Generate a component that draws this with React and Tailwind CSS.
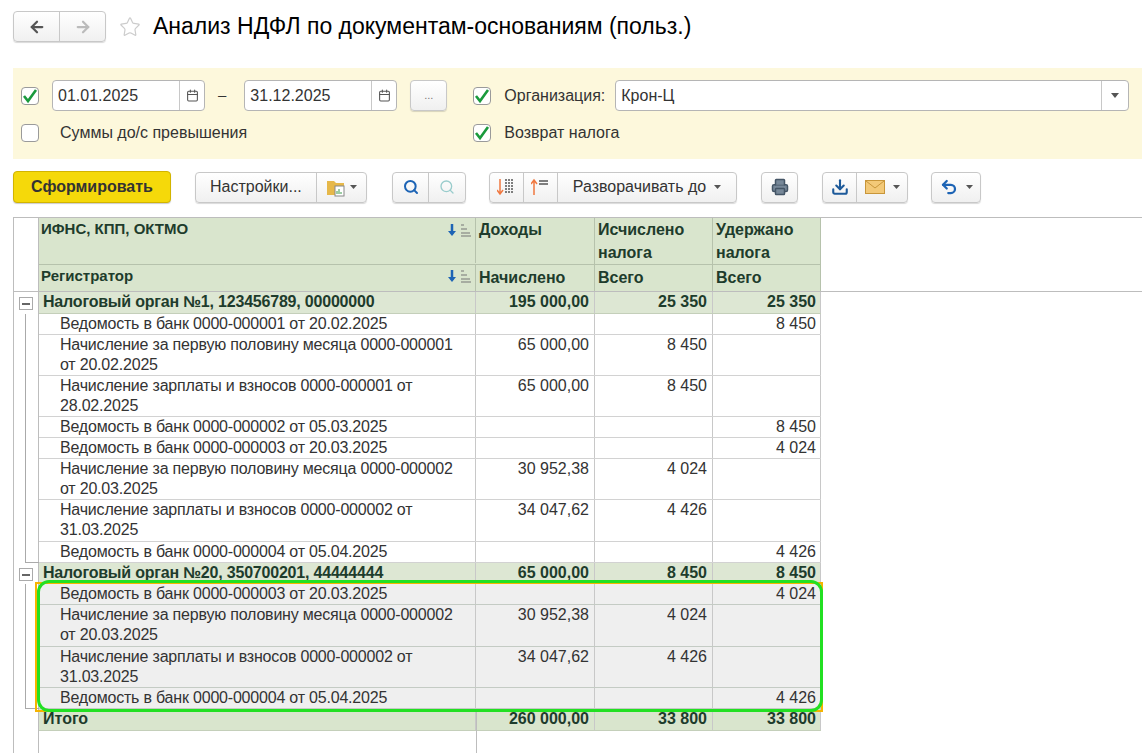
import { ArrowLeft, ArrowRight, Star, Calendar, Search, Printer, Download, Undo2 } from 'lucide-react'

const F = { fontFamily: '"Liberation Sans", Arial, sans-serif' }

const rows = [
  { g: true, name: 'Налоговый орган №1, 123456789, 00000000', a: '195 000,00', b: '25 350', c: '25 350', h: 22 },
  { name: 'Ведомость в банк 0000-000001 от 20.02.2025', c: '8 450', h: 21 },
  { name: 'Начисление за первую половину месяца 0000-000001 от 20.02.2025', a: '65 000,00', b: '8 450', h: 41 },
  { name: 'Начисление зарплаты и взносов 0000-000001 от 28.02.2025', a: '65 000,00', b: '8 450', h: 41 },
  { name: 'Ведомость в банк 0000-000002 от 05.03.2025', c: '8 450', h: 21 },
  { name: 'Ведомость в банк 0000-000003 от 20.03.2025', c: '4 024', h: 21 },
  { name: 'Начисление за первую половину месяца 0000-000002 от 20.03.2025', a: '30 952,38', b: '4 024', h: 41 },
  { name: 'Начисление зарплаты и взносов 0000-000002 от 31.03.2025', a: '34 047,62', b: '4 426', h: 42 },
  { name: 'Ведомость в банк 0000-000004 от 05.04.2025', c: '4 426', h: 21, last: true },
  { g: true, name: 'Налоговый орган №20, 350700201, 44444444', a: '65 000,00', b: '8 450', c: '8 450', h: 21 },
  { s: true, name: 'Ведомость в банк 0000-000003 от 20.03.2025', c: '4 024', h: 21 },
  { s: true, name: 'Начисление за первую половину месяца 0000-000002 от 20.03.2025', a: '30 952,38', b: '4 024', h: 42 },
  { s: true, name: 'Начисление зарплаты и взносов 0000-000002 от 31.03.2025', a: '34 047,62', b: '4 426', h: 41 },
  { s: true, name: 'Ведомость в банк 0000-000004 от 05.04.2025', c: '4 426', h: 21, last: true },
]

const Check = ({ on }) => (
  <div className="w-[18px] h-[18px] border border-[#9a9a9a] bg-white rounded-sm flex items-center justify-center">
    {on && (
      <svg width="16" height="16" viewBox="0 0 16 16"><path d="M2 8l4 5 8-11" stroke="#1a9a3c" strokeWidth="2.6" fill="none" /></svg>
    )}
  </div>
)

const Btn = ({ children, className = '' }) => (
  <div className={`h-[31px] border border-[#c8c8c8] rounded-sm bg-gradient-to-b from-white to-[#f0f0f0] shadow-[0_1px_1px_rgba(0,0,0,0.15)] flex items-center ${className}`}>{children}</div>
)

const Caret = () => <svg width="7" height="4"><path d="M0 0h7L3.5 4z" fill="#555" /></svg>

const Sorter = () => (
  <svg width="26" height="16" viewBox="0 0 26 16">
    <path d="M5 2v10" stroke="#1d64b5" strokeWidth="2.5" /><path d="M1 9l4 5 4-5z" fill="#1d64b5" />
    <path d="M14 3h3M14 7h6M14 11h9M14 14h10" stroke="#777" strokeWidth="1.2" />
  </svg>
)

export default function App() {
  return (
    <div className="w-[1142px] h-[753px] bg-white overflow-hidden relative text-[#333]" style={F}>
      <div className="flex items-center h-[52px] pl-[13px] pt-[1px]">
        <Btn className="w-[93px]">
          <div className="w-[46px] flex justify-center border-r border-[#c8c8c8] h-full items-center"><ArrowLeft size={18} strokeWidth={3} color="#555" /></div>
          <div className="flex-1 flex justify-center"><ArrowRight size={18} strokeWidth={3} color="#bbb" /></div>
        </Btn>
        <Star size={22} color="#ccc" strokeWidth={1.3} className="ml-[13px]" />
        <div className="ml-[12px] text-[23px] text-black">Анализ НДФЛ по документам-основаниям (польз.)</div>
      </div>

      <div className="mt-[16px] ml-[13px] bg-[#fdf8dc] h-[91px] pt-[12px] flex text-[15px]">
        <div className="flex flex-col pl-[8px]">
          <div className="flex items-center gap-[13px]">
            <Check on />
            {['01.01.2025', '31.12.2025'].map((d, i) => (
              <div key={d} className="flex items-center">
                {i === 1 && <span className="mr-[18px]">–</span>}
                <div className="w-[153px] h-[31px] bg-white border border-[#b5b5b5] rounded-sm flex items-center">
                  <span className="flex-1 pl-[5px] text-[16px]">{d}</span>
                  <div className="w-[25px] h-full border-l border-[#c8c8c8] flex items-center justify-center"><Calendar size={13} color="#555" /></div>
                </div>
              </div>
            ))}
            <Btn className="w-[37px] justify-center text-[11px] text-[#777]">...</Btn>
          </div>
          <div className="flex items-center gap-[13px] mt-[10px]">
            <Check /><span className="ml-[8px] text-[16px]">Суммы до/с превышения</span>
          </div>
        </div>
        <div className="flex flex-col ml-[26px]">
          <div className="flex items-center">
            <Check on />
            <span className="ml-[13px] text-[16px]">Организация:</span>
            <div className="ml-[10px] w-[514px] h-[31px] bg-white border border-[#b5b5b5] rounded-sm flex items-center">
              <span className="flex-1 pl-[5px] text-[16px]">Крон-Ц</span>
              <div className="w-[27px] h-full border-l border-[#c8c8c8] flex items-center justify-center"><svg width="8" height="5"><path d="M0 0h8L4 5z" fill="#555" /></svg></div>
            </div>
          </div>
          <div className="flex items-center mt-[10px]">
            <Check on /><span className="ml-[13px] text-[16px]">Возврат налога</span>
          </div>
        </div>
      </div>

      <div className="flex items-center mt-[12px] ml-[13px] text-[16px]">
        <div className="w-[158px] h-[32px] bg-[#f5d90a] border border-[#d2b400] rounded-sm font-bold flex items-center justify-center shadow-[0_1px_1px_rgba(0,0,0,0.2)]">Сформировать</div>
        <Btn className="ml-[24px]">
          <div className="px-[14px] h-full flex items-center border-r border-[#c8c8c8]">Настройки...</div>
          <div className="w-[49px] flex items-center justify-center gap-1">
            <svg width="20" height="20" viewBox="0 0 20 20"><path d="M1 4h7l2 2h8v12H1z" fill="#e6b84a" /><rect x="9" y="9" width="9" height="10" fill="#fff" stroke="#888" /><path d="M11 17v-3M13 17v-5M15 17v-2" stroke="#3a9a4a" /></svg>
            <Caret />
          </div>
        </Btn>
        <Btn className="ml-[25px] w-[74px]">
          <div className="flex-1 flex justify-center border-r border-[#c8c8c8] h-full items-center"><Search size={16} strokeWidth={3} color="#1d64b5" /></div>
          <div className="flex-1 flex justify-center"><Search size={16} strokeWidth={2} color="#9cc" /></div>
        </Btn>
        <Btn className="ml-[23px]">
          <div className="w-[34px] h-full flex items-center justify-center border-r border-[#c8c8c8]">
            <svg width="18" height="18" viewBox="0 0 18 18"><path d="M3 1v14M0 12l3 4 3-4" stroke="#f07840" strokeWidth="1.5" fill="none" /><path d="M8 2h9M8 5h9M8 8h9M8 11h9M8 14h9" stroke="#555" strokeWidth="1.3" strokeDasharray="2 1" /></svg>
          </div>
          <div className="w-[34px] h-full flex items-center justify-center border-r border-[#c8c8c8]">
            <svg width="18" height="18" viewBox="0 0 18 18"><path d="M3 17V3M0 6l3-4 3 4" stroke="#f07840" strokeWidth="1.5" fill="none" /><path d="M8 3h9M8 6h9" stroke="#555" strokeWidth="1.3" /></svg>
          </div>
          <div className="px-[15px] flex items-center gap-[8px]">Разворачивать до<Caret /></div>
        </Btn>
        <Btn className="ml-[24px] w-[37px] justify-center"><Printer size={18} color="#456" fill="#789" /></Btn>
        <Btn className="ml-[24px]">
          <div className="w-[34px] h-full flex items-center justify-center border-r border-[#c8c8c8]"><Download size={18} strokeWidth={2.8} color="#1d5a9a" /></div>
          <div className="w-[50px] flex items-center justify-center gap-[8px]">
            <svg width="20" height="14" viewBox="0 0 20 14"><rect x="0.5" y="0.5" width="19" height="13" fill="#f3c978" stroke="#c8963a" /><path d="M1 1l9 7 9-7" stroke="#c8963a" fill="none" /></svg>
            <Caret />
          </div>
        </Btn>
        <Btn className="ml-[23px] w-[50px] justify-center gap-[8px]"><Undo2 size={18} strokeWidth={3} color="#1d64b5" /><Caret /></Btn>
      </div>

      {/* table */}
      <div className="absolute left-[13px] top-[217px] right-0 bottom-0 border-l border-t border-[#bdbdbd]">
        <div className="absolute left-[462px] top-0 bottom-0 w-px bg-[#bdbdbd]" />
        <div className="absolute left-[24px] top-0 bottom-0 w-px bg-[#bdbdbd]" />
        <div className="relative flex border-b border-[#bdbdbd]">
          <div className="w-[25px] shrink-0" />
          <div className="w-[782px] grid grid-cols-[437px_119px_118px_108px] text-[16px] font-bold text-[#1e3c2c] bg-[#d9e5cd]">
            <div className="h-[45px] px-[2px] text-[15px] flex justify-between border-r border-[#b6c2ac]"><span>ИФНС, КПП, ОКТМО</span><span className="mt-[4px]"><Sorter /></span></div>
            <div className="px-[3px] border-r border-[#b6c2ac]">Доходы</div>
            <div className="px-[3px] leading-[23px] border-r border-[#b6c2ac]">Исчислено налога</div>
            <div className="px-[3px] leading-[23px] border-r border-[#b6c2ac]">Удержано налога</div>
            <div className="h-[27px] px-[2px] text-[15px] flex justify-between border-t border-r border-[#b6c2ac]"><span>Регистратор</span><span className="mt-[3px]"><Sorter /></span></div>
            <div className="px-[3px] pt-[1px] border-t border-r border-[#b6c2ac]">Начислено</div>
            <div className="px-[3px] pt-[1px] border-t border-r border-[#b6c2ac]">Всего</div>
            <div className="px-[3px] pt-[1px] border-t border-r border-[#b6c2ac]">Всего</div>
          </div>
        </div>

        {rows.map((r, i) => (
          <div key={i} className="flex relative" style={{ height: r.h }}>
            <div className="w-[25px] shrink-0 relative">
              {r.g ? (
                <div className="absolute left-[5px] top-[5px] w-[14px] h-[13px] border border-[#aaa] bg-white flex items-center justify-center"><div className="w-[8px] h-[2px] bg-[#666]" /></div>
              ) : (
                <div className="absolute left-[11px] top-0 w-px h-full bg-[#aaa]" />
              )}
              {r.last && <div className="absolute left-[11px] bottom-0 w-[14px] h-px bg-[#aaa]" />}
            </div>
            <div className={`w-[782px] grid grid-cols-[437px_119px_118px_108px] text-[16px] leading-[20px] border-b ${r.g ? 'bg-[#dde7d3] font-bold text-[#1e3c2c] border-[#c4cfba]' : r.s ? 'bg-[#efefef] border-[#c4cbc4]' : 'bg-white border-[#d2d2d2]'}`}>
              <div className={`border-r border-[#c8c8c8] ${r.g ? 'pl-[4px]' : 'pl-[21px] pr-[4px]'}`} style={{ letterSpacing: '-0.2px' }}>{r.name}</div>
              <div className="border-r border-[#c8c8c8] text-right pr-[5px]">{r.a}</div>
              <div className="border-r border-[#c8c8c8] text-right pr-[5px]">{r.b}</div>
              <div className="border-r border-[#c8c8c8] text-right pr-[4px]">{r.c}</div>
            </div>
          </div>
        ))}
        <div className="flex h-[22px]">
          <div className="w-[25px] shrink-0" />
          <div className="w-[782px] grid grid-cols-[437px_119px_118px_108px] text-[16px] leading-[20px] bg-[#d9e5cd] font-bold text-[#1e3c2c] border-b border-[#c4cfba]">
            <div className="border-r border-[#c8c8c8] pl-[4px]">Итого</div>
            <div className="border-r border-[#c8c8c8] text-right pr-[5px]">260 000,00</div>
            <div className="border-r border-[#c8c8c8] text-right pr-[5px]">33 800</div>
            <div className="border-r border-[#c8c8c8] text-right pr-[4px]">33 800</div>
          </div>
        </div>
        <div className="absolute left-[807px] right-0 top-[73px] h-px bg-[#bdbdbd]" />
      </div>

      <div className="absolute left-[35px] top-[582px] w-[788px] h-[130px] border-2 border-[#f5b400]" />
      <div className="absolute left-[37px] top-[580px] w-[786px] h-[132px] border-[3px] border-[#22e022] rounded-[12px]" />
    </div>
  )
}
